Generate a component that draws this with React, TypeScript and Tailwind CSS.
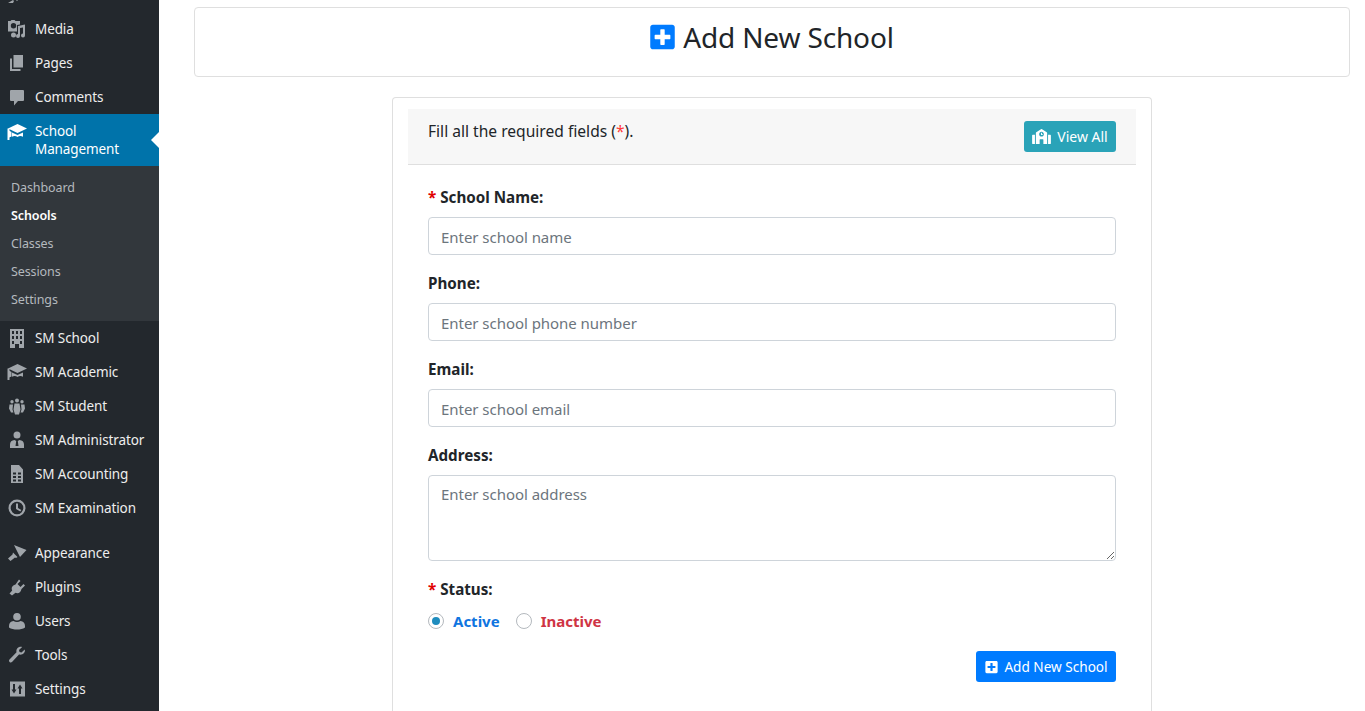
import React from "react";
import { FaPlusSquare, FaSchool } from "react-icons/fa";

const Cap = ({ className }: { className?: string }) => (
  <svg className={className} viewBox="0 0 20 20" fill="currentColor">
    <path d="M10.500 2 1 6.500l9.500 4.500L20 6.500z" />
    <path d="M5 10.500v4.200c1.800-1 3.800-1 5.500.2 1.700-1.200 3.700-1.200 5.500-.2v-4.200L10.500 13z" />
    <path d="M.5 6.500h2v11.500h-2z" />
    <path d="M2 8.500 4.500 10v4.500L2 15.500z" />
  </svg>
);

const icons: Record<string, React.ReactNode> = {
  pin: <path d="M1 20l5-3 1 1-1 2zM6 14l4 4 2-2-4-4z" />,
  media: (
    <path
      fillRule="evenodd"
      d="M1 2h2.500l1-1h3l1 1H13v3.500l-3 .5v6.500H1zm5.500 2a2.700 2.700 0 1 0 0 5.400 2.700 2.700 0 0 0 0-5.400zM11 7l7-1.500v11a2 2 0 1 1-2-2V8.500l-3 .6V17a2 2 0 1 1-2-2zM6.500 13.500a2.500 2.500 0 1 1 0 5 2.500 2.500 0 0 1 0-5z"
    />
  ),
  pages: <path fillRule="evenodd" d="M6.500 2H16v12.500H6.500zM3 5.500h2V16h8.500v2H3z" />,
  comments: <path d="M4 3h12a1 1 0 0 1 1 1v9a1 1 0 0 1-1 1h-5l-4 4.500V14H4a1 1 0 0 1-1-1V4a1 1 0 0 1 1-1z" />,
  building: (
    <path
      fillRule="evenodd"
      d="M3 1h14v19h-5v-4H8v4H3zm2 2v3h2V3zm4 0v3h2V3zm4 0v3h2V3zM5 8v3h2V8zm4 0v3h2V8zm4 0v3h2V8zm-8 5v3h2v-3zm8 0v3h2v-3z"
    />
  ),
  groups: (
    <path d="M10 2.500a2 2 0 1 1 0 4 2 2 0 0 1 0-4zM5 4a1.700 1.700 0 1 1 0 3.400A1.700 1.700 0 0 1 5 4zm10 0a1.700 1.700 0 1 1 0 3.400A1.700 1.700 0 0 1 15 4zM7.500 7.500h5l1 6-1.500 5H8l-1.500-5zM2.500 8.500h3.500l-.5 5 1 3H4l-2-4zM14 8.500h3.500l.5 4-2 4h-2.500l1-3z" />
  ),
  admin: <path d="M10 1.500a3.500 3.500 0 1 1 0 7 3.500 3.500 0 0 1 0-7zM7.500 10l1.700 1L8.500 16h3l-.7-5 1.700-1c2.800.3 4.500 1.800 4.500 4.500V18H3v-3.500C3 11.800 4.700 10.300 7.500 10z" />,
  sheet: (
    <path
      fillRule="evenodd"
      d="M4 1h8l4 4.500V19H4zm2 7.500v2h3v-2zm5 0v2h3v-2zM6 12v2h3v-2zm5 0v2h3v-2zM6 15.500v2h3v-2zm5 0v2h3v-2z"
    />
  ),
  clock: (
    <path
      fillRule="evenodd"
      d="M10 1.500a8.500 8.500 0 1 1 0 17 8.500 8.500 0 0 1 0-17zm0 2.200a6.300 6.300 0 1 0 0 12.600 6.300 6.300 0 0 0 0-12.600zM9 5.500h2V10l3.300 2-1 1.600L9 11z"
    />
  ),
  appearance: <path d="M7 2l12.500 5-6.500 7zM6 9.500l4.500 4.500-1.500 1-1-.5-4.500 3.500L1 15.500l4.500-4z" />,
  plugins: <path d="M12 2.500 13.500 4l-3 3 3 3 3-3L18 8.500l-3.500 3.500c-1 4-3.500 5-6 3.800L5 18.500 2.500 16.500l2.700-3C4 11 5 8.500 8.500 7.500z" />,
  users: <path d="M10 2a3.800 3.800 0 1 1 0 7.600A3.800 3.800 0 0 1 10 2zM6.500 10c2 1.300 5 1.300 7 0 2.800.4 4.500 2.200 4.500 5v1.500c-4 2.800-12 2.800-16 0V15c0-2.800 1.700-4.600 4.500-5z" />,
  tools: <path d="M17.700 4.500 14.500 7.500l-2-.5-.5-2 3.200-3c-3-1-6.500 1.300-5.700 5.200L2.500 14.500c-1.500 1.500.8 4 2.500 2.500l7-7.500c3.700.8 6.700-2 5.700-5z" />,
  settings: (
    <path
      fillRule="evenodd"
      d="M3 2.500h15v15H3zM6 5v5.500H4.500L7 14.500l2.500-4H8V5zm6 10V9.500h-1.500L13 5.500l2.500 4H14V15z"
    />
  ),
};

const Icon = ({ name }: { name: string }) => (
  <svg className="h-5 w-5 text-[#a0a5aa]" viewBox="0 0 20 20" fill="currentColor">
    {icons[name]}
  </svg>
);

const MenuRow = ({ icon, label }: { icon: string; label: string }) => (
  <div className="flex h-[34px] items-center pl-[7px] text-[13.5px] tracking-[-0.1px] text-[#eeeeee]">
    <div className="flex w-[28px] shrink-0">
      {icon === "cap" ? <Cap className="h-[20px] w-[20px] text-[#a0a5aa]" /> : <Icon name={icon} />}
    </div>
    <span>{label}</span>
  </div>
);

const Sidebar = () => (
  <aside className="flex h-[711px] w-[159px] shrink-0 flex-col overflow-hidden bg-[#23282d]">
    <div className="h-[12px] shrink-0 overflow-hidden pl-[7px]">
      <div className="-mt-[17px]">
        <Icon name="pin" />
      </div>
    </div>
    <MenuRow icon="media" label="Media" />
    <MenuRow icon="pages" label="Pages" />
    <MenuRow icon="comments" label="Comments" />
    <div className="relative flex h-[52px] bg-[#0073aa] pl-[7px] pt-[8px] text-[13.5px] leading-[18px] tracking-[-0.1px] text-white">
      <div className="w-[28px] shrink-0">
        <Cap className="h-[20px] w-[20px] text-white" />
      </div>
      <span className="w-[100px]">School Management</span>
      <div className="absolute right-0 top-[18px] border-y-[8px] border-r-[8px] border-y-transparent border-r-white" />
    </div>
    <div className="flex h-[155px] flex-col bg-[#32373c] pb-[6px] pt-[8px] text-[12.5px] tracking-[-0.1px]">
      {["Dashboard", "Schools", "Classes", "Sessions", "Settings"].map((item) => (
        <div
          key={item}
          className={`flex h-[28px] items-center pl-[11px] ${
            item === "Schools" ? "font-semibold text-white" : "text-[#b4b9be]"
          }`}
        >
          {item}
        </div>
      ))}
    </div>
    <MenuRow icon="building" label="SM School" />
    <MenuRow icon="cap" label="SM Academic" />
    <MenuRow icon="groups" label="SM Student" />
    <MenuRow icon="admin" label="SM Administrator" />
    <MenuRow icon="sheet" label="SM Accounting" />
    <MenuRow icon="clock" label="SM Examination" />
    <div className="h-[11px] shrink-0" />
    <MenuRow icon="appearance" label="Appearance" />
    <MenuRow icon="plugins" label="Plugins" />
    <MenuRow icon="users" label="Users" />
    <MenuRow icon="tools" label="Tools" />
    <MenuRow icon="settings" label="Settings" />
  </aside>
);

const Label = ({ text, required }: { text: string; required?: boolean }) => (
  <label className="block h-[24px] text-[15.2px] font-bold leading-[24px] text-[#212529]">
    {required && <span className="text-[#e00000]">* </span>}
    {text}
  </label>
);

const Field = ({ label, placeholder, required }: { label: string; placeholder: string; required?: boolean }) => (
  <div className="mb-[16px]">
    <Label text={label} required={required} />
    <input
      className="mt-[8px] block h-[38px] w-full rounded-[4px] border border-[#ced4da] bg-white px-[12px] pt-[2px] text-[15px] tracking-[-0.04px] text-[#495057] outline-none placeholder:text-[#6c757d]"
      placeholder={placeholder}
    />
  </div>
);

const App = () => (
  <div
    className="flex h-[711px] w-[1365px] overflow-hidden bg-white"
    style={{ fontFamily: '"Noto Sans", sans-serif' }}
  >
    <Sidebar />
    <main className="flex min-w-0 flex-1 flex-col pl-[35px] pr-[15px] pt-[7px]">
      <div className="flex h-[70px] shrink-0 items-center justify-center gap-[8px] rounded-[4px] border border-[#dfdfdf] bg-white pb-[11px] text-[28px] tracking-[-0.15px] text-[#212529]">
        <FaPlusSquare className="h-[28px] w-[25px] text-[#007bff]" />
        <span>Add New School</span>
      </div>
      <div className="mx-auto mt-[20px] w-[760px] flex-1 rounded-t-[4px] border border-b-0 border-[#dfdfdf] px-[15px] pt-[11px]">
        <div className="flex h-[56px] justify-between border-b border-[#dfdfdf] bg-[#f7f7f7] px-[20px] pt-[12px] text-[#212529]">
          <span className="-mt-[1px] text-[15.6px] leading-[22px]">
            Fill all the required fields (<span className="text-[#ff3b3b]">*</span>).
          </span>
          <button className="flex h-[31px] w-[92px] items-center justify-center gap-[6px] rounded-[3px] bg-[#2aa3b8] text-[14px] text-white">
            <FaSchool className="h-[15px] w-[19px]" />
            View All
          </button>
        </div>
        <form className="px-[20px] pt-[20px]">
          <Field label="School Name:" placeholder="Enter school name" required />
          <Field label="Phone:" placeholder="Enter school phone number" />
          <Field label="Email:" placeholder="Enter school email" />
          <div className="mb-[16px]">
            <Label text="Address:" />
            <textarea
              className="mt-[8px] block h-[86px] w-full rounded-[4px] border border-[#ced4da] px-[12px] pb-[6px] pt-[7px] text-[15px] tracking-[-0.04px] outline-none placeholder:text-[#6c757d]"
              placeholder="Enter school address"
            />
          </div>
          <Label text="Status:" required />
          <div className="mt-[8px] flex h-[24px] items-center text-[15px] font-bold">
            <div className="flex h-[16px] w-[16px] items-center justify-center rounded-full border border-[#b4b9be]">
              <div className="h-[8px] w-[8px] rounded-full bg-[#1e8cbe]" />
            </div>
            <span className="ml-[9px] text-[#0f75e0]">Active</span>
            <div className="ml-[16px] h-[16px] w-[16px] rounded-full border border-[#b4b9be]" />
            <span className="ml-[9px] text-[#cf3444]">Inactive</span>
          </div>
          <div className="mt-[18px] flex justify-end">
            <button
              type="button"
              className="flex h-[31px] w-[140px] items-center justify-center gap-[6px] rounded-[3px] bg-[#007bff] pl-[1px] pt-[1px] text-[13.6px] text-white"
            >
              <FaPlusSquare className="-mt-[1px] h-[14px] w-[13px]" />
              Add New School
            </button>
          </div>
        </form>
      </div>
    </main>
  </div>
);

export default App;
